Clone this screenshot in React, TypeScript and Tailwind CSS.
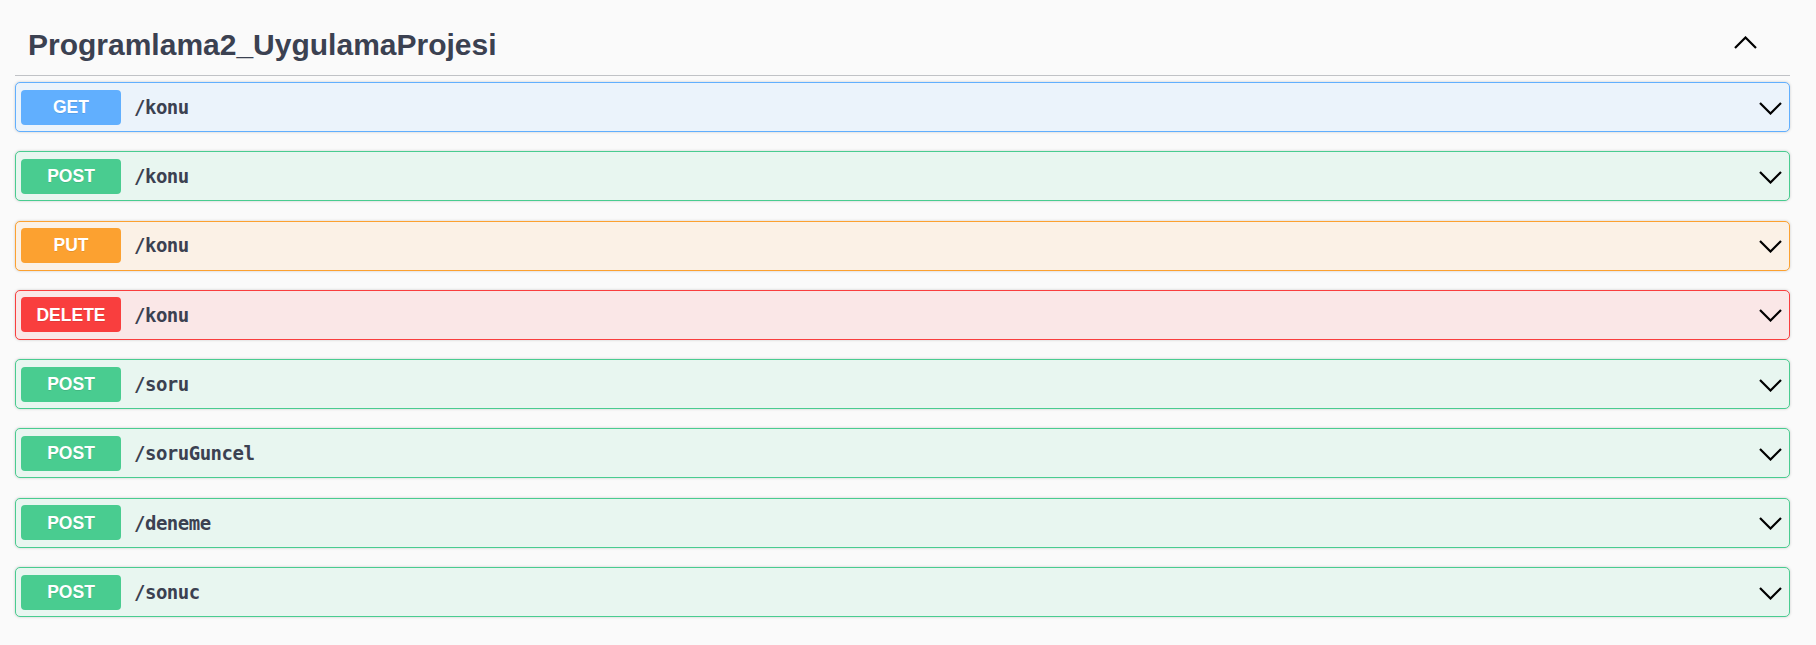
import React from "react";

type Method = "GET" | "POST" | "PUT" | "DELETE";

interface Operation {
  method: Method;
  path: string;
}

const OPERATIONS: Operation[] = [
  { method: "GET", path: "/konu" },
  { method: "POST", path: "/konu" },
  { method: "PUT", path: "/konu" },
  { method: "DELETE", path: "/konu" },
  { method: "POST", path: "/soru" },
  { method: "POST", path: "/soruGuncel" },
  { method: "POST", path: "/deneme" },
  { method: "POST", path: "/sonuc" },
];

const STYLES: Record<Method, { row: string; badge: string }> = {
  GET: { row: "border-[#61affe] bg-[#ebf3fb]", badge: "bg-[#61affe]" },
  POST: { row: "border-[#49cc90] bg-[#e8f6f0]", badge: "bg-[#49cc90]" },
  PUT: { row: "border-[#fca130] bg-[#fbf1e6]", badge: "bg-[#fca130]" },
  DELETE: { row: "border-[#f93e3e] bg-[#fae7e7]", badge: "bg-[#f93e3e]" },
};

function Chevron({ up = false }: { up?: boolean }) {
  return (
    <svg width="23" height="13" viewBox="0 0 23 13" fill="none">
      <path
        d={up ? "M1 12 L11.5 1.5 L22 12" : "M1 1 L11.5 11.5 L22 1"}
        stroke="#000"
        strokeWidth="2.2"
      />
    </svg>
  );
}

function OperationRow({ op }: { op: Operation }) {
  const s = STYLES[op.method];
  return (
    <div
      className={`flex items-center h-[50px] px-[5px] rounded-[5px] border shadow-[0_0_3px_rgba(0,0,0,0.19)] ${s.row}`}
    >
      <span
        className={`w-[100px] h-[35px] flex items-center justify-center rounded-[4px] text-white font-bold text-[17.5px] [text-shadow:0_1px_0_rgba(0,0,0,0.1)] font-['Liberation_Sans',Arial,sans-serif] ${s.badge}`}
      >
        {op.method}
      </span>
      <span className="pl-[13px] text-[19px] tracking-[-0.5px] font-bold text-[#3b4151] font-['DejaVu_Sans_Mono',monospace]">
        {op.path}
      </span>
      <span className="ml-auto mr-[2px] mt-[2px] flex items-center">
        <Chevron />
      </span>
    </div>
  );
}

export default function App() {
  return (
    <div className="min-h-[645px] bg-[#fafafa] pl-[15px] pr-[26px] pt-[14px]">
      <div className="flex items-center h-[62px] border-b border-[rgba(59,65,81,0.3)] pl-[13px] pr-[33px]">
        <h3 className="text-[30px] font-bold text-[#3b4151] font-['Liberation_Sans',Arial,sans-serif]">
          Programlama2_UygulamaProjesi
        </h3>
        <span className="ml-auto mt-[-4px] flex items-center">
          <Chevron up />
        </span>
      </div>
      <div className="flex flex-col gap-[19.3px] pt-[6px]">
        {OPERATIONS.map((op, i) => (
          <OperationRow key={i} op={op} />
        ))}
      </div>
    </div>
  );
}
